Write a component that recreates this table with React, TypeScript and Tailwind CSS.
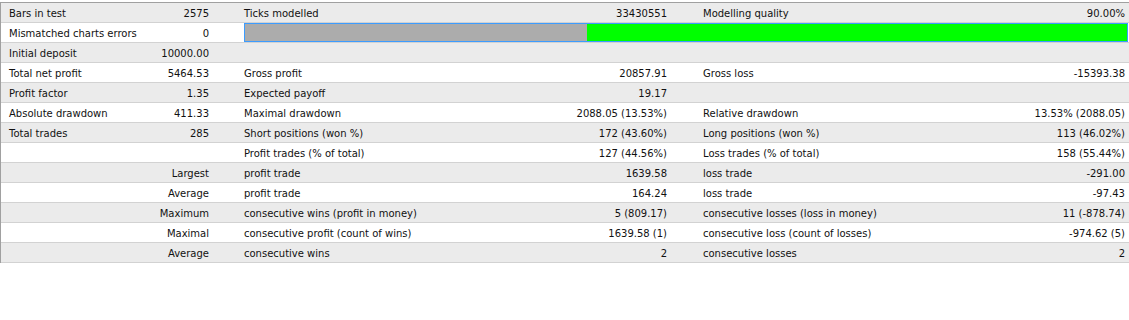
import React from 'react';

type Row = [string, string, string, string, string, string, boolean?];

const rows: Row[] = [
    ['Bars in test', '2575', 'Ticks modelled', '33430551', 'Modelling quality', '90.00%'],
    ['Mismatched charts errors', '0', '', '', '', '', true],
    ['Initial deposit', '10000.00', '', '', '', ''],
    ['Total net profit', '5464.53', 'Gross profit', '20857.91', 'Gross loss', '-15393.38'],
    ['Profit factor', '1.35', 'Expected payoff', '19.17', '', ''],
    ['Absolute drawdown', '411.33', 'Maximal drawdown', '2088.05 (13.53%)', 'Relative drawdown', '13.53% (2088.05)'],
    ['Total trades', '285', 'Short positions (won %)', '172 (43.60%)', 'Long positions (won %)', '113 (46.02%)'],
    ['', '', 'Profit trades (% of total)', '127 (44.56%)', 'Loss trades (% of total)', '158 (55.44%)'],
    ['', 'Largest', 'profit trade', '1639.58', 'loss trade', '-291.00'],
    ['', 'Average', 'profit trade', '164.24', 'loss trade', '-97.43'],
    ['', 'Maximum', 'consecutive wins (profit in money)', '5 (809.17)', 'consecutive losses (loss in money)', '11 (-878.74)'],
    ['', 'Maximal', 'consecutive profit (count of wins)', '1639.58 (1)', 'consecutive loss (count of losses)', '-974.62 (5)'],
    ['', 'Average', 'consecutive wins', '2', 'consecutive losses', '2'],
];

const App: React.FC = () => {
    return (
        <div className="w-[1129px] h-[320px] bg-white pt-[2px] text-[10px] text-[#111] font-['DejaVu_Sans',Verdana,sans-serif]">
            {/* Report table */}
            <div className="border-t border-l border-[#a0a0a0]">
                {rows.map((r, i) => (
                    <div
                        key={i}
                        className={`flex h-[20px] items-center pt-px border-b border-[#d2d2d2] ${i % 2 === 0 ? 'bg-[#ebebeb]' : 'bg-white'}`}
                    >
                        <div className="w-[119px] pl-[8px] whitespace-nowrap">{r[0]}</div>
                        <div className="w-[92px] pr-[3px] text-right whitespace-nowrap">{r[1]}</div>
                        {r[6] ? (
                            // Modelling quality bar
                            <div className="flex-1 pl-[32px] pr-[1px] -mt-px">
                                <div className="flex h-[19px] border border-[#3c9cff]">
                                    <div className="w-[342px] bg-[#acacac]" />
                                    <div className="flex-1 bg-[#00ff00]" />
                                </div>
                            </div>
                        ) : (
                            <>
                                <div className="w-[248px] pl-[32px] whitespace-nowrap">{r[2]}</div>
                                <div className="w-[210px] pr-[3px] text-right whitespace-nowrap">{r[3]}</div>
                                <div className="w-[250px] pl-[33px] whitespace-nowrap">{r[4]}</div>
                                <div className="flex-1 pr-[4px] text-right whitespace-nowrap">{r[5]}</div>
                            </>
                        )}
                    </div>
                ))}
            </div>
        </div>
    );
};

export default App;
